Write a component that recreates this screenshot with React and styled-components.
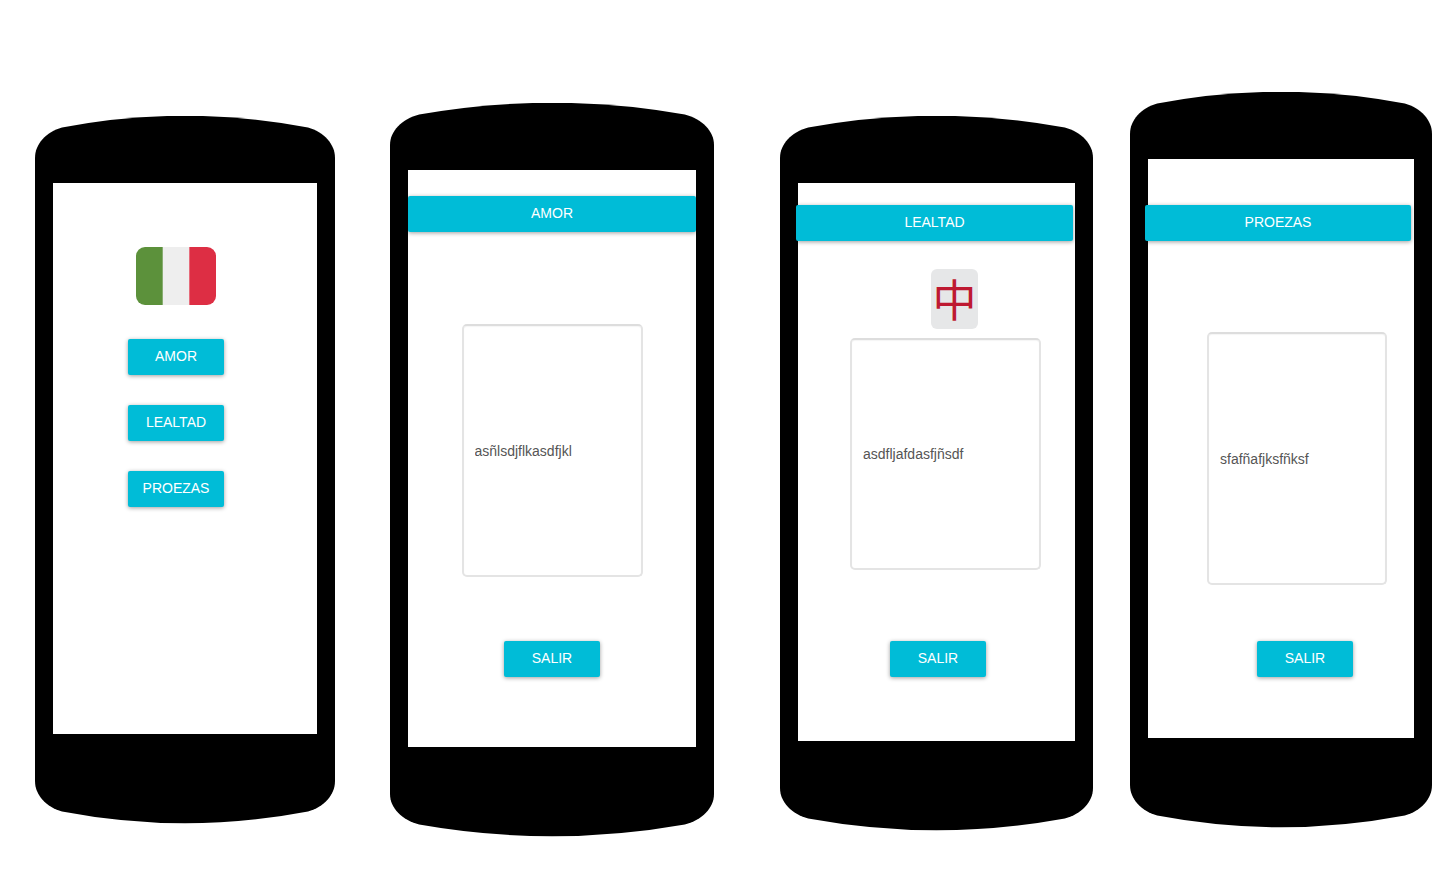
import React from "react";
import styled, { createGlobalStyle } from "styled-components";

const GlobalStyle = createGlobalStyle`
  *, *::before, *::after { box-sizing: border-box; }
  body {
    margin: 0;
    background: #ffffff;
    font-family: "Liberation Sans", Arial, sans-serif;
    font-size: 14px;
  }
`;

const Board = styled.main`
  display: flex;
  align-items: flex-start;
  min-height: 100vh;
  padding: 0 9px 40px 0;
`;

const PhoneFrame = styled.section`
  flex: ${(p) => p.$weight} 1 0;
  min-width: 0;
  display: flex;
  flex-direction: column;
  margin-top: ${(p) => p.$top}px;
  margin-left: ${(p) => p.$left}px;
`;

const CapSvg = styled.svg`
  display: block;
  width: 100%;
  height: ${(p) => p.$height}px;
  fill: #000000;
`;

const Screen = styled.div`
  display: flex;
  flex-direction: column;
  align-items: center;
  padding: ${(p) => p.$top}px 0 ${(p) => p.$bottom}px;
  background: #ffffff;
  border: solid #000000;
  border-width: 0 18px;
  background-clip: padding-box;
`;

const Button = styled.button`
  width: 96px;
  height: 36px;
  padding: 0 0 2px;
  border: 0;
  border-radius: 2px;
  background: #00bcd7;
  color: #ffffff;
  font: 500 14px/20px "Liberation Sans", Arial, sans-serif;
  text-align: center;
  box-shadow: 0 1px 4px rgba(0, 0, 0, 0.38);
  cursor: pointer;
`;

const TitleBar = styled(Button)`
  width: 100%;
  flex: none;
  position: relative;
  right: ${(p) => p.$overhang || 0}px;
`;

const Menu = styled.nav`
  display: flex;
  flex-direction: column;
  align-items: center;
  gap: 30px;
  margin-top: 34px;
`;

const MenuColumn = styled.div`
  display: flex;
  flex-direction: column;
  align-items: center;
  padding-right: 18px;
`;

const Slot = styled.div`
  display: flex;
  justify-content: center;
  width: 100%;
  margin-top: ${(p) => p.$gap}px;
  padding-left: ${(p) => p.$indent || 0}px;
`;

const TextField = styled.input`
  width: ${(p) => p.$width}px;
  height: ${(p) => p.$height}px;
  padding: 0 11px;
  border: 2px solid #e4e4e4;
  border-top-color: #dddddd;
  border-radius: 5px;
  outline: 0;
  background: #ffffff;
  color: #555555;
  font: 14px/20px "Liberation Sans", Arial, sans-serif;
  box-shadow: inset 0 1px 1px rgba(0, 0, 0, 0.04);
`;

const Tile = styled.div`
  display: flex;
  align-items: center;
  justify-content: center;
  width: 47px;
  height: 60px;
  padding-bottom: 3px;
  border-radius: 6px;
  background: #e6e7e8;
  color: #be1931;
  font: 400 44px/56px "Noto Sans CJK SC", sans-serif;
`;

const FlagSvg = styled.svg`
  display: block;
  width: 80px;
  height: 58px;
`;

function Flag() {
  return (
    <FlagSvg viewBox="0 0 80 58" role="img" aria-label="Bandera">
      <path d="M9 0H27V58H9A9 9 0 0 1 0 49V9A9 9 0 0 1 9 0Z" fill="#5c913b" />
      <path d="M26.7 0H53.3V58H26.7Z" fill="#eeeeee" />
      <path d="M53.3 0H71A9 9 0 0 1 80 9V49A9 9 0 0 1 71 58H53.3Z" fill="#dd2e44" />
    </FlagSvg>
  );
}

function Phone({ weight, top, left, padTop, padBottom, label, children }) {
  return (
    <PhoneFrame $weight={weight} $top={top} $left={left} aria-label={label}>
      <CapSvg $height={67} viewBox="0 0 300 67" preserveAspectRatio="none" aria-hidden="true">
        <path d="M0 67V42C0 28 11 16 27 11.5Q150 -12 273 11.5C289 16 300 28 300 42V67Z" />
      </CapSvg>
      <Screen $top={padTop} $bottom={padBottom}>
        {children}
      </Screen>
      <CapSvg $height={90} viewBox="0 0 300 90" preserveAspectRatio="none" aria-hidden="true">
        <path d="M0 0V47C0 61 11 73 27 77.5Q150 101 273 77.5C289 73 300 61 300 47V0Z" />
      </CapSvg>
    </PhoneFrame>
  );
}

export default function App() {
  return (
    <>
      <GlobalStyle />
      <Board>
        <Phone weight={300} top={116} left={35} padTop={64} padBottom={227} label="Inicio">
          <MenuColumn>
            <Flag />
            <Menu>
              <Button type="button">AMOR</Button>
              <Button type="button">LEALTAD</Button>
              <Button type="button">PROEZAS</Button>
            </Menu>
          </MenuColumn>
        </Phone>

        <Phone weight={324} top={103} left={55} padTop={26} padBottom={70} label="Amor">
          <TitleBar type="button">AMOR</TitleBar>
          <Slot $gap={92}>
            <TextField $width={181} $height={253} aria-label="Amor" defaultValue="asñlsdjflkasdfjkl" />
          </Slot>
          <Slot $gap={64}>
            <Button type="button">SALIR</Button>
          </Slot>
        </Phone>

        <Phone weight={313} top={116} left={66} padTop={22} padBottom={64} label="Lealtad">
          <TitleBar type="button" $overhang={2}>LEALTAD</TitleBar>
          <Slot $gap={28} $indent={36}>
            <Tile>中</Tile>
          </Slot>
          <Slot $gap={9} $indent={18}>
            <TextField $width={191} $height={232} aria-label="Lealtad" defaultValue="asdfljafdasfjñsdf" />
          </Slot>
          <Slot $gap={71} $indent={3}>
            <Button type="button">SALIR</Button>
          </Slot>
        </Phone>

        <Phone weight={302} top={92} left={37} padTop={46} padBottom={61} label="Proezas">
          <TitleBar type="button" $overhang={3}>PROEZAS</TitleBar>
          <Slot $gap={91} $indent={32}>
            <TextField $width={180} $height={253} aria-label="Proezas" defaultValue="sfafñafjksfñksf" />
          </Slot>
          <Slot $gap={56} $indent={48}>
            <Button type="button">SALIR</Button>
          </Slot>
        </Phone>
      </Board>
    </>
  );
}
